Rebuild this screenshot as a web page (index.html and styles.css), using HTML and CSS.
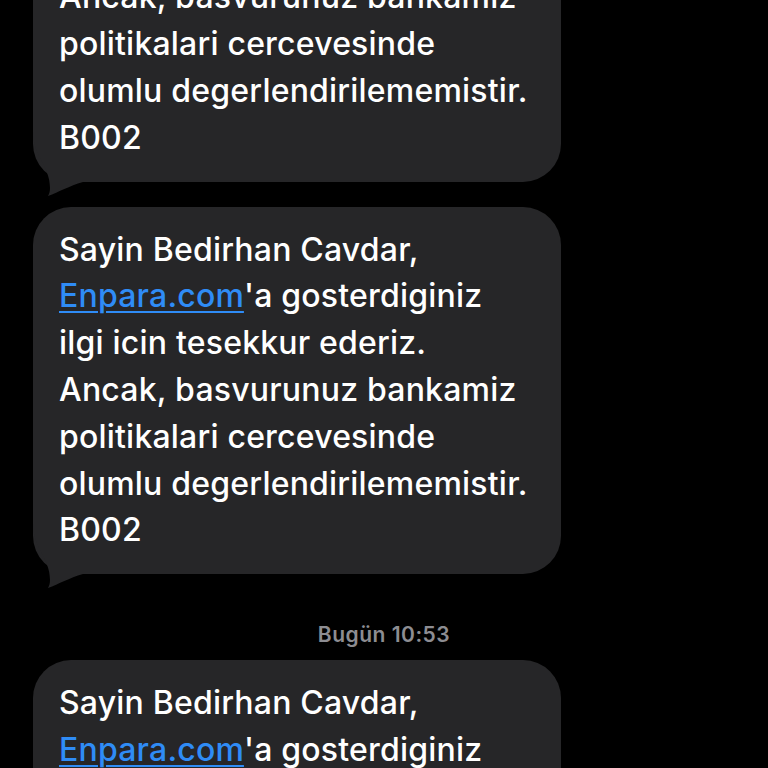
FILE: index.html
```html
<!DOCTYPE html>
<html lang="tr">
<head>
<meta charset="utf-8">
<link rel="stylesheet" href="styles.css">
</head>
<body>
<div class="thread">
  <div class="msg">
    <p class="text">Sayin Bedirhan Cavdar,<br><a class="link">Enpara.com</a>'a gosterdiginiz<br>ilgi icin tesekkur ederiz.<br>Ancak, basvurunuz bankamiz<br>politikalari cercevesinde<br>olumlu degerlendirilememistir.<br>B002</p>
    <svg class="tail" width="50" height="64" viewBox="0 -50 50 64"><path d="M0,-50 C1,-24 17,-16 17,6 C17,10 16,12 15,14 C26,10 36,4 50,0 L50,-50 Z"/></svg>
  </div>
  <div class="msg">
    <p class="text">Sayin Bedirhan Cavdar,<br><a class="link">Enpara.com</a>'a gosterdiginiz<br>ilgi icin tesekkur ederiz.<br>Ancak, basvurunuz bankamiz<br>politikalari cercevesinde<br>olumlu degerlendirilememistir.<br>B002</p>
    <svg class="tail" width="50" height="64" viewBox="0 -50 50 64"><path d="M0,-50 C1,-24 17,-16 17,6 C17,10 16,12 15,14 C26,10 36,4 50,0 L50,-50 Z"/></svg>
  </div>
  <div class="stamp">Bugün 10:53</div>
  <div class="msg">
    <p class="text">Sayin Bedirhan Cavdar,<br><a class="link">Enpara.com</a>'a gosterdiginiz<br>ilgi icin tesekkur ederiz.<br>Ancak, basvurunuz bankamiz<br>politikalari cercevesinde<br>olumlu degerlendirilememistir.<br>B002</p>
    <svg class="tail" width="50" height="64" viewBox="0 -50 50 64"><path d="M0,-50 C1,-24 17,-16 17,6 C17,10 16,12 15,14 C26,10 36,4 50,0 L50,-50 Z"/></svg>
  </div>
</div>
</body>
</html>
```
FILE: styles.css
```css
html, body {
  margin: 0;
  padding: 0;
  background: #000;
  height: 100%;
  overflow: hidden;
}
.thread {
  display: flex;
  flex-direction: column;
  margin-top: -186px;
  font-family: Inter, "Noto Sans", sans-serif;
}
.msg {
  position: relative;
  width: 528px;
  margin-left: 33px;
  margin-bottom: 25px;
  background: #262628;
  border-radius: 38px;
  box-sizing: border-box;
  padding: 20px 20px 20px 26px;
}
.text {
  margin: 0;
  color: #fff;
  font-size: 32px;
  line-height: 46.8px;
  font-weight: 500;
  letter-spacing: 0.2px;
  position: relative;
  z-index: 1;
}
.link {
  color: #2f8cf6;
  text-decoration: underline;
  text-decoration-thickness: 2px;
  text-underline-offset: 4px;
}
.tail {
  position: absolute;
  left: 0;
  bottom: -14px;
  fill: #262628;
}
.stamp {
  text-align: center;
  color: #8d8d92;
  font-size: 21px;
  font-weight: 600;
  line-height: 24px;
  letter-spacing: 0.5px;
  margin-top: 24px;
  margin-bottom: 13px;
}
```
